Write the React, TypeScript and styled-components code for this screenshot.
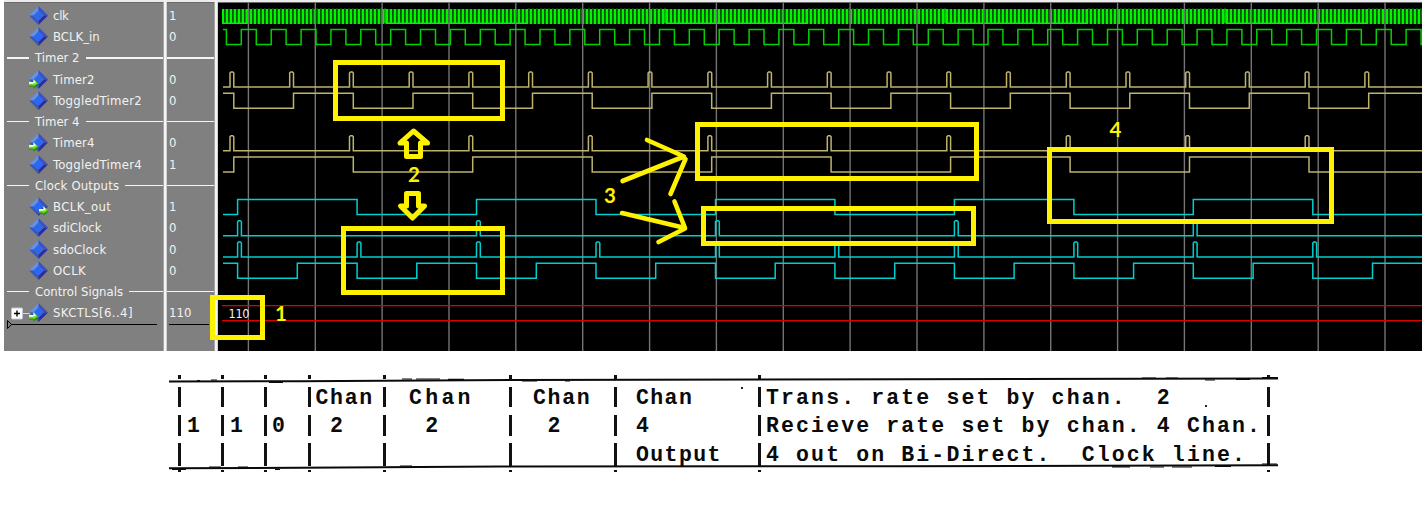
import React from 'react';
import styled, { createGlobalStyle } from 'styled-components';

const GlobalStyle = createGlobalStyle`
  * { box-sizing: border-box; }
  body { margin: 0; background: #fff; overflow: hidden; }
`;

const YELLOW = '#fff200';
const PITCH = 21.25;

const Page = styled.main`
  position: relative;
  width: 1428px;
  height: 516px;
  background: #fff;
  display: flex;
  flex-direction: column;
  align-items: flex-start;
`;

const Viewer = styled.section`
  display: flex;
  width: 1418px;
  height: 351px;
  margin-left: 4px;
  border-top: 2px solid #ececec;
`;

const Pane = styled.div<{ $width: number }>`
  width: ${(p) => p.$width}px;
  height: 349px;
  padding-top: 1.7px;
  background: #808080;
  border-top: 1px solid #696969;
  overflow: hidden;
`;

const Splitter = styled.div`
  width: 4px;
  flex: none;
  background: #f4f4f4;
  border-left: 1px solid #a6a6a6;
  border-right: 1px solid #d0d0d0;
`;

const Row = styled.div`
  height: ${PITCH}px;
  display: flex;
  align-items: center;
  font: 13px/1 'DejaVu Sans Condensed', 'DejaVu Sans', sans-serif;
  font-stretch: condensed;
  color: #f2f2f2;
  white-space: pre;
`;

const IconSlot = styled.div`
  width: 49px;
  height: 21px;
  flex: none;
  svg { display: block; }
`;

const Label = styled.span<{ $spacing?: number }>`
  letter-spacing: ${(p) => p.$spacing ?? 0}px;
`;

const Value = styled.span`
  padding-left: 2px;
`;

const Dash = styled.i<{ $width?: number }>`
  height: 1.5px;
  background: #f4f4f4;
  ${(p) => (p.$width ? `width: ${p.$width}px; margin: 0 6px 0 3px; flex: none;` : 'flex: 1; margin-left: 6px;')}
`;

const FullDash = styled(Dash)`
  margin-left: 0;
`;

const CursorLine = styled.div<{ $inset: number; $right: number }>`
  height: 1px;
  margin: 1px ${(p) => p.$right}px 0 ${(p) => p.$inset}px;
  background: #000;
`;

const CursorHandle = styled.svg`
  display: block;
  margin: -5px 0 0 3px;
`;

const Waves = styled.svg`
  display: block;
  flex: 1;
  height: 349px;
  background: #000;
  border-top: 1px solid #696969;
`;

const Notes = styled.svg`
  position: absolute;
  left: 0;
  top: 0;
`;

type Signal = { name: string; value?: string; group?: boolean; port?: 'in' | 'out'; bus?: boolean; spacing?: number };

const signals: Signal[] = [
  { name: 'clk', value: '1', spacing: -0.3 },
  { name: 'BCLK_in', value: '0' },
  { name: 'Timer 2', group: true },
  { name: 'Timer2', value: '0', port: 'in', spacing: 0.1 },
  { name: 'ToggledTimer2', value: '0', spacing: 0.25 },
  { name: 'Timer 4', group: true },
  { name: 'Timer4', value: '0', port: 'in', spacing: 0.1 },
  { name: 'ToggledTimer4', value: '1', spacing: 0.25 },
  { name: 'Clock Outputs', group: true, spacing: 0.15 },
  { name: 'BCLK_out', value: '1', port: 'out', spacing: 0.4 },
  { name: 'sdiClock', value: '0' },
  { name: 'sdoClock', value: '0', spacing: 0.1 },
  { name: 'OCLK', value: '0', spacing: 0.4 },
  { name: 'Control Signals', group: true },
  { name: 'SKCTLS[6..4]', value: '110', port: 'in', bus: true, spacing: 0.4 },
];

function SignalIcon({ port, bus }: { port?: 'in' | 'out'; bus?: boolean }) {
  const ax = port === 'out' ? 35 : 25;
  return (
    <svg width="49" height="21" viewBox="0 0 49 21">
      {bus && (
        <g>
          <path d="M18 11.5H28" stroke="#d8d8d8" />
          <rect x="7.5" y="6" width="11" height="11" rx="1" fill="#fff" stroke="#c0c8d8" />
          <path d="M10 11.5h6M13 8.5v6" stroke="#000" strokeWidth="1.4" />
        </g>
      )}
      <path d="M34.5 1L25 10.5h4.5l5-5z" fill="#6191e8" />
      <path d="M34.5 1L44 10.5h-4.5l-5-5z" fill="#3a50c4" />
      <path d="M25 10.5L34.5 20v-4.5l-5-5z" fill="#3558c4" />
      <path d="M44 10.5L34.5 20v-4.5l5-5z" fill="#2c2ba0" />
      <path d="M34.5 5.5l5 5-5 5-5-5z" fill="#2a68f4" />
      {port && (
        <g transform={`translate(${ax} 9)`}>
          <path d="M0 4.4h4.5V1L9.6 6 4.5 11V8.4H0z" fill="#238a10" />
          <path d="M0 4h4.5V1L9 5.6 4.5 8.5V7.4H0z" fill="#6fe01c" />
          <path d="M0 4h4.5V1.2L7 4.4 4 5.8H0z" fill="#ecffdc" />
        </g>
      )}
    </svg>
  );
}

function toggle(y: number, start: number, period: number, high: boolean) {
  const top = y - 7.3;
  const bottom = y + 7.7;
  let level = high;
  let d = `M223 ${level ? top : bottom}`;
  for (let x = start; x < 1423; x += period) {
    d += `H${x.toFixed(1)}`;
    level = !level;
    d += `V${level ? top : bottom}`;
  }
  return d + 'H1423';
}

function pulses(y: number, start: number, period: number) {
  const top = y - 7.3;
  const bottom = y + 7.7;
  let d = `M223 ${bottom}`;
  for (let x = start; x < 1423; x += period) {
    d += `H${x.toFixed(1)}V${top + 1}l1 -1h1.8l1 1V${bottom}`;
  }
  return d + 'H1423';
}

const rowY = (i: number) => 15.5 + i * PITCH;
const T = 59.733;
const GREEN = '#00d200';
const SAND = '#bdb36c';
const CYAN = '#00cfcf';

const traces = [
  { d: toggle(rowY(1), 226.4, T / 4, true), color: GREEN },
  { d: pulses(rowY(3), 230, T), color: SAND },
  { d: toggle(rowY(4), 233.8, T, true), color: SAND },
  { d: pulses(rowY(6), 230, T * 2), color: SAND },
  { d: toggle(rowY(7), 233.8, T * 2, false), color: SAND },
  { d: toggle(rowY(9), 237.6, T * 2, false), color: CYAN },
  { d: pulses(rowY(10), 237.6, T * 4), color: CYAN },
  { d: pulses(rowY(11), 237.6, T * 2), color: CYAN },
  { d: toggle(rowY(12), 237.6, T, true), color: CYAN },
];

function Waveforms() {
  const ticks: number[] = [];
  for (let x = 222; x < 1422; x += 4) ticks.push(x);
  const dashed = [246, 526, 806, 1086, 1366];
  const inDashed = (x: number) => dashed.some((s) => x >= s && x < s + 138);
  return (
    <Waves viewBox="218 3 1204 348" preserveAspectRatio="none">
      <rect x="222" y="9" width="1200" height="15" fill="#00f400" />
      <path
        d={ticks.map((x) => (inDashed(x) ? `M${x + 2.9} 8V24` : `M${x + 2.9} 9V22.5`)).join('')}
        stroke="#005000"
        strokeWidth="1.7"
      />
      {dashed.map((s) => (
        <g key={s} fill="#00f400" opacity="0.6">
          <rect x={s - 0.5} y="9" width="2" height="14" />
          <rect x={s + 138} y="9" width="2" height="14" />
        </g>
      ))}
      {Array.from({ length: 18 }, (_, i) => (
        <path key={i} d={`M${(248.4 + i * 66.86).toFixed(1)} 3V351`} stroke="#747474" strokeWidth="1.4" />
      ))}
      {traces.map((t, i) => (
        <path key={i} d={t.d} fill="none" stroke={t.color} strokeWidth="1.5" />
      ))}
      <g fill="#dc0000">
        <rect x="222" y="305" width="1200" height="1.3" />
        <rect x="222" y="320" width="1200" height="1.3" />
      </g>
      <text x="228.5" y="318" fill="#f4f4f4" fontFamily="'DejaVu Sans Condensed', 'DejaVu Sans', sans-serif" fontStretch="condensed" fontSize="12.5" textLength="21">
        110
      </text>
    </Waves>
  );
}

const boxes = [
  [333, 60, 505, 121],
  [341, 226, 505, 295],
  [210, 295, 265, 340],
  [695, 122, 979, 181],
  [701, 206, 976, 246],
  [1047, 147, 1334, 224],
];

const captions: [string, number, number][] = [
  ['1', 275, 321],
  ['2', 408, 182],
  ['3', 604, 203],
  ['4', 1109.5, 137],
];

function Annotations() {
  return (
    <Notes width="1428" height="516" viewBox="0 0 1428 516">
      <g fill="none" stroke={YELLOW} strokeWidth="5">
        {boxes.map(([l, t, r, b]) => (
          <rect key={`${l}-${t}`} x={l + 2.5} y={t + 2.5} width={r - l - 5} height={b - t - 5} />
        ))}
        <g strokeLinejoin="round">
          <path d="M413.5 131L400 143h6.5v13.5h14V143h7z" />
          <path d="M406.5 193.5h12V206h6L412.5 218 400.5 206h6z" />
        </g>
        <g strokeWidth="4.6" strokeLinecap="round" strokeLinejoin="round">
          <path d="M647 140L684 156.5L622.5 181M685.5 159L670.5 194" />
          <path d="M674.5 201.5L685 228L622 213M685 228.5L658.5 242" />
        </g>
      </g>
      <g fill={YELLOW} fontFamily="Lato, sans-serif" fontWeight="700" fontSize="20.5">
        {captions.map(([c, x, y]) => (
          <text key={c} x={x} y={y}>{c}</text>
        ))}
      </g>
    </Notes>
  );
}

const Scan = styled.section`
  position: relative;
  margin: 22px 0 0 169px;
  width: 1110px;
  height: 102px;
  padding: 11px 0 0 9px;
  display: grid;
  grid-template-columns: 43px 43px 43.5px 75.5px 126px 105px 144px 509px 4px;
  color: #0a0a0a;
  font: bold 21.5px/28.4px 'Liberation Mono', monospace;
`;

const Cell = styled.div<{ $pad?: number; $spacing?: number }>`
  position: relative;
  height: 86px;
  padding-left: ${(p) => p.$pad ?? 9}px;
  letter-spacing: ${(p) => p.$spacing ?? 1.7}px;
  white-space: pre;
  &::before {
    content: '';
    position: absolute;
    left: 0;
    top: -9px;
    width: 3px;
    height: 98px;
    background: linear-gradient(#111 0 4px, transparent 4px 12px, #111 12px 32px, transparent 32px 40px,
      #111 40px 61px, transparent 61px 68px, #111 68px 91px, transparent 91px 95px, #111 95px 97px, transparent 97px);
  }
`;

const Rules = styled.svg`
  position: absolute;
  left: 0;
  top: 0;
`;

const columns: { lines: string[]; pad?: number; spacing?: number }[] = [
  { lines: ['', '1'] },
  { lines: ['', '1'] },
  { lines: ['', '0'], pad: 8 },
  { lines: ['Chan', ' 2'], pad: 8 },
  { lines: ['Chan', ' 2'], pad: 26, spacing: 3.3 },
  { lines: ['Chan', ' 2'], pad: 24 },
  { lines: ['Chan', '4', 'Output'], pad: 22, spacing: 1.4 },
  {
    lines: ['Trans. rate set by chan.  2', 'Recieve rate set by chan. 4 Chan.', '4 out on Bi-Direct.  Clock line.'],
    pad: 8,
    spacing: 2.13,
  },
  { lines: [] },
];

function Table() {
  return (
    <Scan>
      {columns.map((c, i) => (
        <Cell key={i} $pad={c.pad} $spacing={c.spacing}>
          {c.lines.map((l, j) => (
            <div key={j}>{l || ' '}</div>
          ))}
        </Cell>
      ))}
      <Rules width="1110" height="102" viewBox="169 373 1110 102">
        <g fill="none" stroke="#0a0a0a" strokeWidth="2">
          <path d="M169 381.6L300 381.2L520 380L900 379.3L1278 378.4" />
          <path d="M169 468.3L300 467.8L500 466.6L900 466.2L1278 465.2" />
          <path
            d="M197 380.5h3M211 380h6M269 382.5h14M402 379h10M416 379h24M448 379.3h16M522 381h15M565 381h5M1142 378h14M1166 378h12M1205 380h10M1236 379.5h14M1262 377.5h16"
            strokeWidth="1.2"
          />
          <path
            d="M172 469.5h14M209 467h12M238 467h10M275 469.5h5M400 466h12M1112 466.8h18M1150 467h14M1172 467h20M1215 466.5h16M1262 464h15"
            strokeWidth="1.2"
          />
        </g>
        <g fill="#222">
          <rect x="741" y="387" width="2" height="2" />
          <rect x="1205" y="405" width="2" height="2" />
        </g>
      </Rules>
    </Scan>
  );
}

export default function App() {
  return (
    <Page>
      <GlobalStyle />
      <Viewer>
        <Pane $width={159}>
          {signals.map((s) =>
            s.group ? (
              <Row key={s.name}>
                <Dash $width={22} />
                <Label $spacing={s.spacing}>{s.name}</Label>
                <Dash />
              </Row>
            ) : (
              <Row key={s.name}>
                <IconSlot>
                  <SignalIcon port={s.port} bus={s.bus} />
                </IconSlot>
                <Label $spacing={s.spacing}>{s.name}</Label>
              </Row>
            ),
          )}
          <CursorLine $inset={4} $right={6} />
          <CursorHandle width="6" height="9" viewBox="0 0 6 9">
            <path d="M0.5 0.5L4.5 4.5L0.5 8.5z" fill="#808080" stroke="#000" />
          </CursorHandle>
        </Pane>
        <Splitter />
        <Pane $width={47}>
          {signals.map((s) => (
            <Row key={s.name}>{s.group ? <FullDash /> : <Value>{s.value}</Value>}</Row>
          ))}
          <CursorLine $inset={2} $right={5} />
        </Pane>
        <Splitter />
        <Waveforms />
      </Viewer>
      <Table />
      <Annotations />
    </Page>
  );
}
